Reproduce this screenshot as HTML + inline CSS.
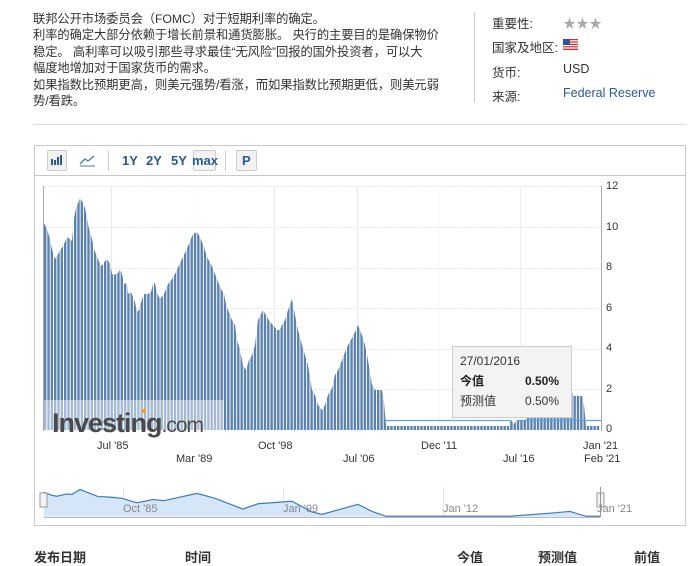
<!DOCTYPE html>
<html><head><meta charset="utf-8"><style>
*{margin:0;padding:0;box-sizing:border-box}
body{width:700px;height:553px;overflow:hidden;background:#fff;font-family:"Liberation Sans","Noto Sans CJK SC",sans-serif;color:#333;position:relative}
.desc{position:absolute;left:33px;top:11px;white-space:nowrap;font-size:12.3px;line-height:16.4px;color:#333;letter-spacing:-0.1px}
.vline{position:absolute;left:474px;top:12px;width:1px;height:90px;background:#ccc}
.info{position:absolute;left:492px;font-size:12.5px;color:#333}
.iv{position:absolute;left:563px;font-size:12.5px;color:#333}
.hr{position:absolute;left:33px;top:124px;width:653px;height:1px;background:#ddd}
.frame{position:absolute;left:34px;top:145px;width:652px;height:381px;border:1px solid #c8c8c8}
.tb{position:absolute;left:34px;top:145px;width:652px;height:31px;border-bottom:1px solid #c8c8c8}
.btn{position:absolute;top:150px;height:21px;border:1px solid #ccc;background:#f2f2f2;border-radius:2px}
.bt{position:absolute;top:153px;font-size:13px;font-weight:bold;color:#2a5a94}
.sep{position:absolute;top:151px;width:1px;height:20px;background:#ccc}
.ax{position:absolute;font-size:11px;color:#333}
.nl{position:absolute;font-size:11px;color:#888;top:503px}
.th{position:absolute;top:547px;font-size:13px;font-weight:bold;color:#333}
</style></head><body>
<div class="desc">联邦公开市场委员会（FOMC）对于短期利率的确定。<br>利率的确定大部分依赖于增长前景和通货膨胀。 央行的主要目的是确保物价<br>稳定。 高利率可以吸引那些寻求最佳“无风险”回报的国外投资者，可以大<br>幅度地增加对于国家货币的需求。<br>如果指数比预期更高，则美元强势/看涨，而如果指数比预期更低，则美元弱<br>势/看跌。</div>
<div class="vline"></div>
<div class="info" style="top:13px">重要性:</div>
<div class="iv" style="top:13px;color:#aaa;font-size:13px;letter-spacing:0px">★★★</div>
<div class="info" style="top:37px">国家及地区:</div>
<div class="iv" style="top:39px"><svg width="15" height="11"><rect width="15" height="11" fill="#fff"/><g fill="#c33"><rect y="0" width="15" height="1.2"/><rect y="2.4" width="15" height="1.2"/><rect y="4.8" width="15" height="1.2"/><rect y="7.2" width="15" height="1.2"/><rect y="9.6" width="15" height="1.4"/></g><rect width="7" height="6" fill="#3a4f8f"/></svg></div>
<div class="info" style="top:62px">货币:</div>
<div class="iv" style="top:62px">USD</div>
<div class="info" style="top:86px">来源:</div>
<div class="iv" style="top:86px;color:#2a5a94">Federal Reserve</div>
<div class="hr"></div>
<div class="frame"></div>
<div class="tb"></div>
<div class="btn" style="left:47px;width:20px"></div>
<svg style="position:absolute;left:51px;top:154px" width="14" height="12"><g fill="#2a5a94"><rect x="0" y="5" width="2" height="6"/><rect x="3" y="6" width="2" height="5"/><rect x="6" y="3" width="2" height="8"/><rect x="9" y="1" width="2" height="10"/></g></svg>
<svg style="position:absolute;left:79px;top:154px" width="17" height="13"><path d="M1 10 L6 5 L9 7 L15 2" stroke="#4a7ab5" fill="none" stroke-width="1.3"/><path d="M1 12 L16 12" stroke="#4a7ab5"/></svg>
<div class="sep" style="left:108px"></div>
<div class="bt" style="left:122px">1Y</div>
<div class="bt" style="left:146px">2Y</div>
<div class="bt" style="left:171px">5Y</div>
<div class="btn" style="left:193px;width:23px"></div>
<div class="bt" style="left:192px">max</div>
<div class="sep" style="left:225px"></div>
<div class="btn" style="left:236px;width:21px"></div>
<div class="bt" style="left:242px">P</div>

<svg style="position:absolute;left:0;top:0" width="700" height="553">
<defs><pattern id="st" patternUnits="userSpaceOnUse" width="3.33" height="10" x="44"><rect x="2.4" y="0" width="0.93" height="10" fill="#fff"/></pattern></defs>
<g stroke="#eaeaea" stroke-width="1">
<line x1="44" y1="186.5" x2="601" y2="186.5"/><line x1="44" y1="227.5" x2="601" y2="227.5"/><line x1="44" y1="268.5" x2="601" y2="268.5"/><line x1="44" y1="308.5" x2="601" y2="308.5"/><line x1="44" y1="349.5" x2="601" y2="349.5"/><line x1="44" y1="389.5" x2="601" y2="389.5"/>
<line x1="111.5" y1="186" x2="111.5" y2="430"/><line x1="193.5" y1="186" x2="193.5" y2="430"/><line x1="274.5" y1="186" x2="274.5" y2="430"/><line x1="357.5" y1="186" x2="357.5" y2="430"/><line x1="439.5" y1="186" x2="439.5" y2="430"/><line x1="520.5" y1="186" x2="520.5" y2="430"/>
</g>
<line x1="43.5" y1="186" x2="43.5" y2="431" stroke="#aaa"/>
<line x1="601.5" y1="186" x2="601.5" y2="431" stroke="#aaa"/>
<polygon fill="#5b82ad" points="44,430 44,223 47,229 50,239 52,249 55,259 57,256 61,249 64,244 67,237 70,239 72,241 74,218 76,208 78,203 80,198 83,203 85,208 87,218 89,229 92,239 94,249 96,254 98,259 101,266 103,264 105,261 107,259 110,264 112,274 114,275 118,273 120,269 122,274 124,284 127,283 128,294 131,292 135,302 137,312 139,310 142,299 144,294 148,294 151,292 153,284 155,283 157,293 160,299 164,294 168,284 172,279 175,274 180,263 184,255 188,246 193,234 197,232 200,237 202,242 204,247 206,254 208,259 211,264 213,269 215,274 217,279 219,284 221,289 224,294 226,304 228,310 232,320 235,325 237,340 240,350 243,365 246,370 249,360 252,355 255,345 258,320 263,310 267,317 270,322 273,325 277,330 280,330 282,325 285,320 288,310 292,299 295,315 298,330 302,345 305,355 308,365 312,390 315,395 318,405 322,410 325,405 328,395 332,388 335,375 338,370 342,360 345,352 348,345 352,338 355,332 358,325 362,335 365,345 368,360 372,385 375,390 382,390 384,402 386,426 510,426 510,420 525,420 528,415 535,410 542,405 550,400 558,392 565,385 570,385 573,396 582,396 584,405 586,426 600,426 600,430"/>
<rect x="44" y="186" width="557" height="245" fill="url(#st)"/>
<line x1="385" y1="420.5" x2="601" y2="420.5" stroke="#5aa5e8" stroke-width="1.2"/>
<rect x="44" y="400" width="180" height="30" fill="#fff" opacity="0.45"/>
<text x="52" y="432" font-family="Liberation Sans,sans-serif" font-size="27" font-weight="bold" fill="#4a4a4a" letter-spacing="-1">Investing<tspan font-weight="normal" font-size="21">.com</tspan></text>
<rect x="142" y="409" width="4" height="4" fill="#f0a030"/>
<line x1="44" y1="517.5" x2="600" y2="517.5" stroke="#bbb"/>
<g stroke="#e6e6e6"><line x1="123.5" y1="487" x2="123.5" y2="517"/><line x1="283.5" y1="487" x2="283.5" y2="517"/><line x1="443.5" y1="487" x2="443.5" y2="517"/></g>
<g transform="translate(0,466) scale(1,0.118)"><polygon fill="#d6e6f9" points="44,430 44,223 52,249 57,256 67,237 72,241 80,198 89,229 98,259 110,264 122,274 137,312 153,284 164,294 197,232 215,274 243,365 258,320 292,299 312,390 322,410 358,325 372,385 386,426 510,426 550,400 570,385 586,426 600,426 600,430"/><polyline fill="none" stroke="#3d7bbf" stroke-width="1.2" vector-effect="non-scaling-stroke" points="44,223 52,249 57,256 67,237 72,241 80,198 89,229 98,259 110,264 122,274 137,312 153,284 164,294 197,232 215,274 243,365 258,320 292,299 312,390 322,410 358,325 372,385 386,426 510,426 550,400 570,385 586,426 600,426"/></g>
<rect x="40" y="493" width="7" height="14" fill="#f2f2f2" stroke="#999"/>
<rect x="597" y="493" width="7" height="14" fill="#f2f2f2" stroke="#999"/>
<line x1="600.5" y1="487" x2="600.5" y2="517" stroke="#999"/>
<rect x="452.5" y="346.5" width="119" height="71" fill="#f3f3f3" stroke="#ccc"/>
<path d="M509 418 L514 424 L519 418 Z" fill="#f3f3f3"/>
<text x="460" y="365" font-size="12" fill="#333" font-family="Liberation Sans,sans-serif">27/01/2016</text>
<text x="460" y="385" font-size="12" font-weight="bold" fill="#222" font-family="Liberation Sans,Noto Sans CJK SC,sans-serif">今值</text>
<text x="525" y="385" font-size="12" font-weight="bold" fill="#222" font-family="Liberation Sans,sans-serif">0.50%</text>
<text x="460" y="405" font-size="12" fill="#333" font-family="Liberation Sans,Noto Sans CJK SC,sans-serif">预测值</text>
<text x="525" y="405" font-size="12" fill="#333" font-family="Liberation Sans,sans-serif">0.50%</text>
</svg>
<div class="ax" style="left:606px;top:180px">12</div>
<div class="ax" style="left:606px;top:221px">10</div>
<div class="ax" style="left:606px;top:261px">8</div>
<div class="ax" style="left:606px;top:302px">6</div>
<div class="ax" style="left:606px;top:342px">4</div>
<div class="ax" style="left:606px;top:383px">2</div>
<div class="ax" style="left:606px;top:423px">0</div>
<div class="ax" style="left:97px;top:440px">Jul '85</div>
<div class="ax" style="left:258px;top:440px">Oct '98</div>
<div class="ax" style="left:421px;top:440px">Dec '11</div>
<div class="ax" style="left:583px;top:440px">Jan '21</div>
<div class="ax" style="left:176px;top:453px">Mar '89</div>
<div class="ax" style="left:343px;top:453px">Jul '06</div>
<div class="ax" style="left:503px;top:453px">Jul '16</div>
<div class="ax" style="left:584px;top:453px">Feb '21</div>
<div class="nl" style="left:123px">Oct '85</div>
<div class="nl" style="left:283px">Jan '99</div>
<div class="nl" style="left:443px">Jan '12</div>
<div class="nl" style="left:597px">Jan '21</div>
<div class="th" style="left:34px">发布日期</div>
<div class="th" style="left:185px">时间</div>
<div class="th" style="left:457px">今值</div>
<div class="th" style="left:538px">预测值</div>
<div class="th" style="left:634px">前值</div>
</body></html>
